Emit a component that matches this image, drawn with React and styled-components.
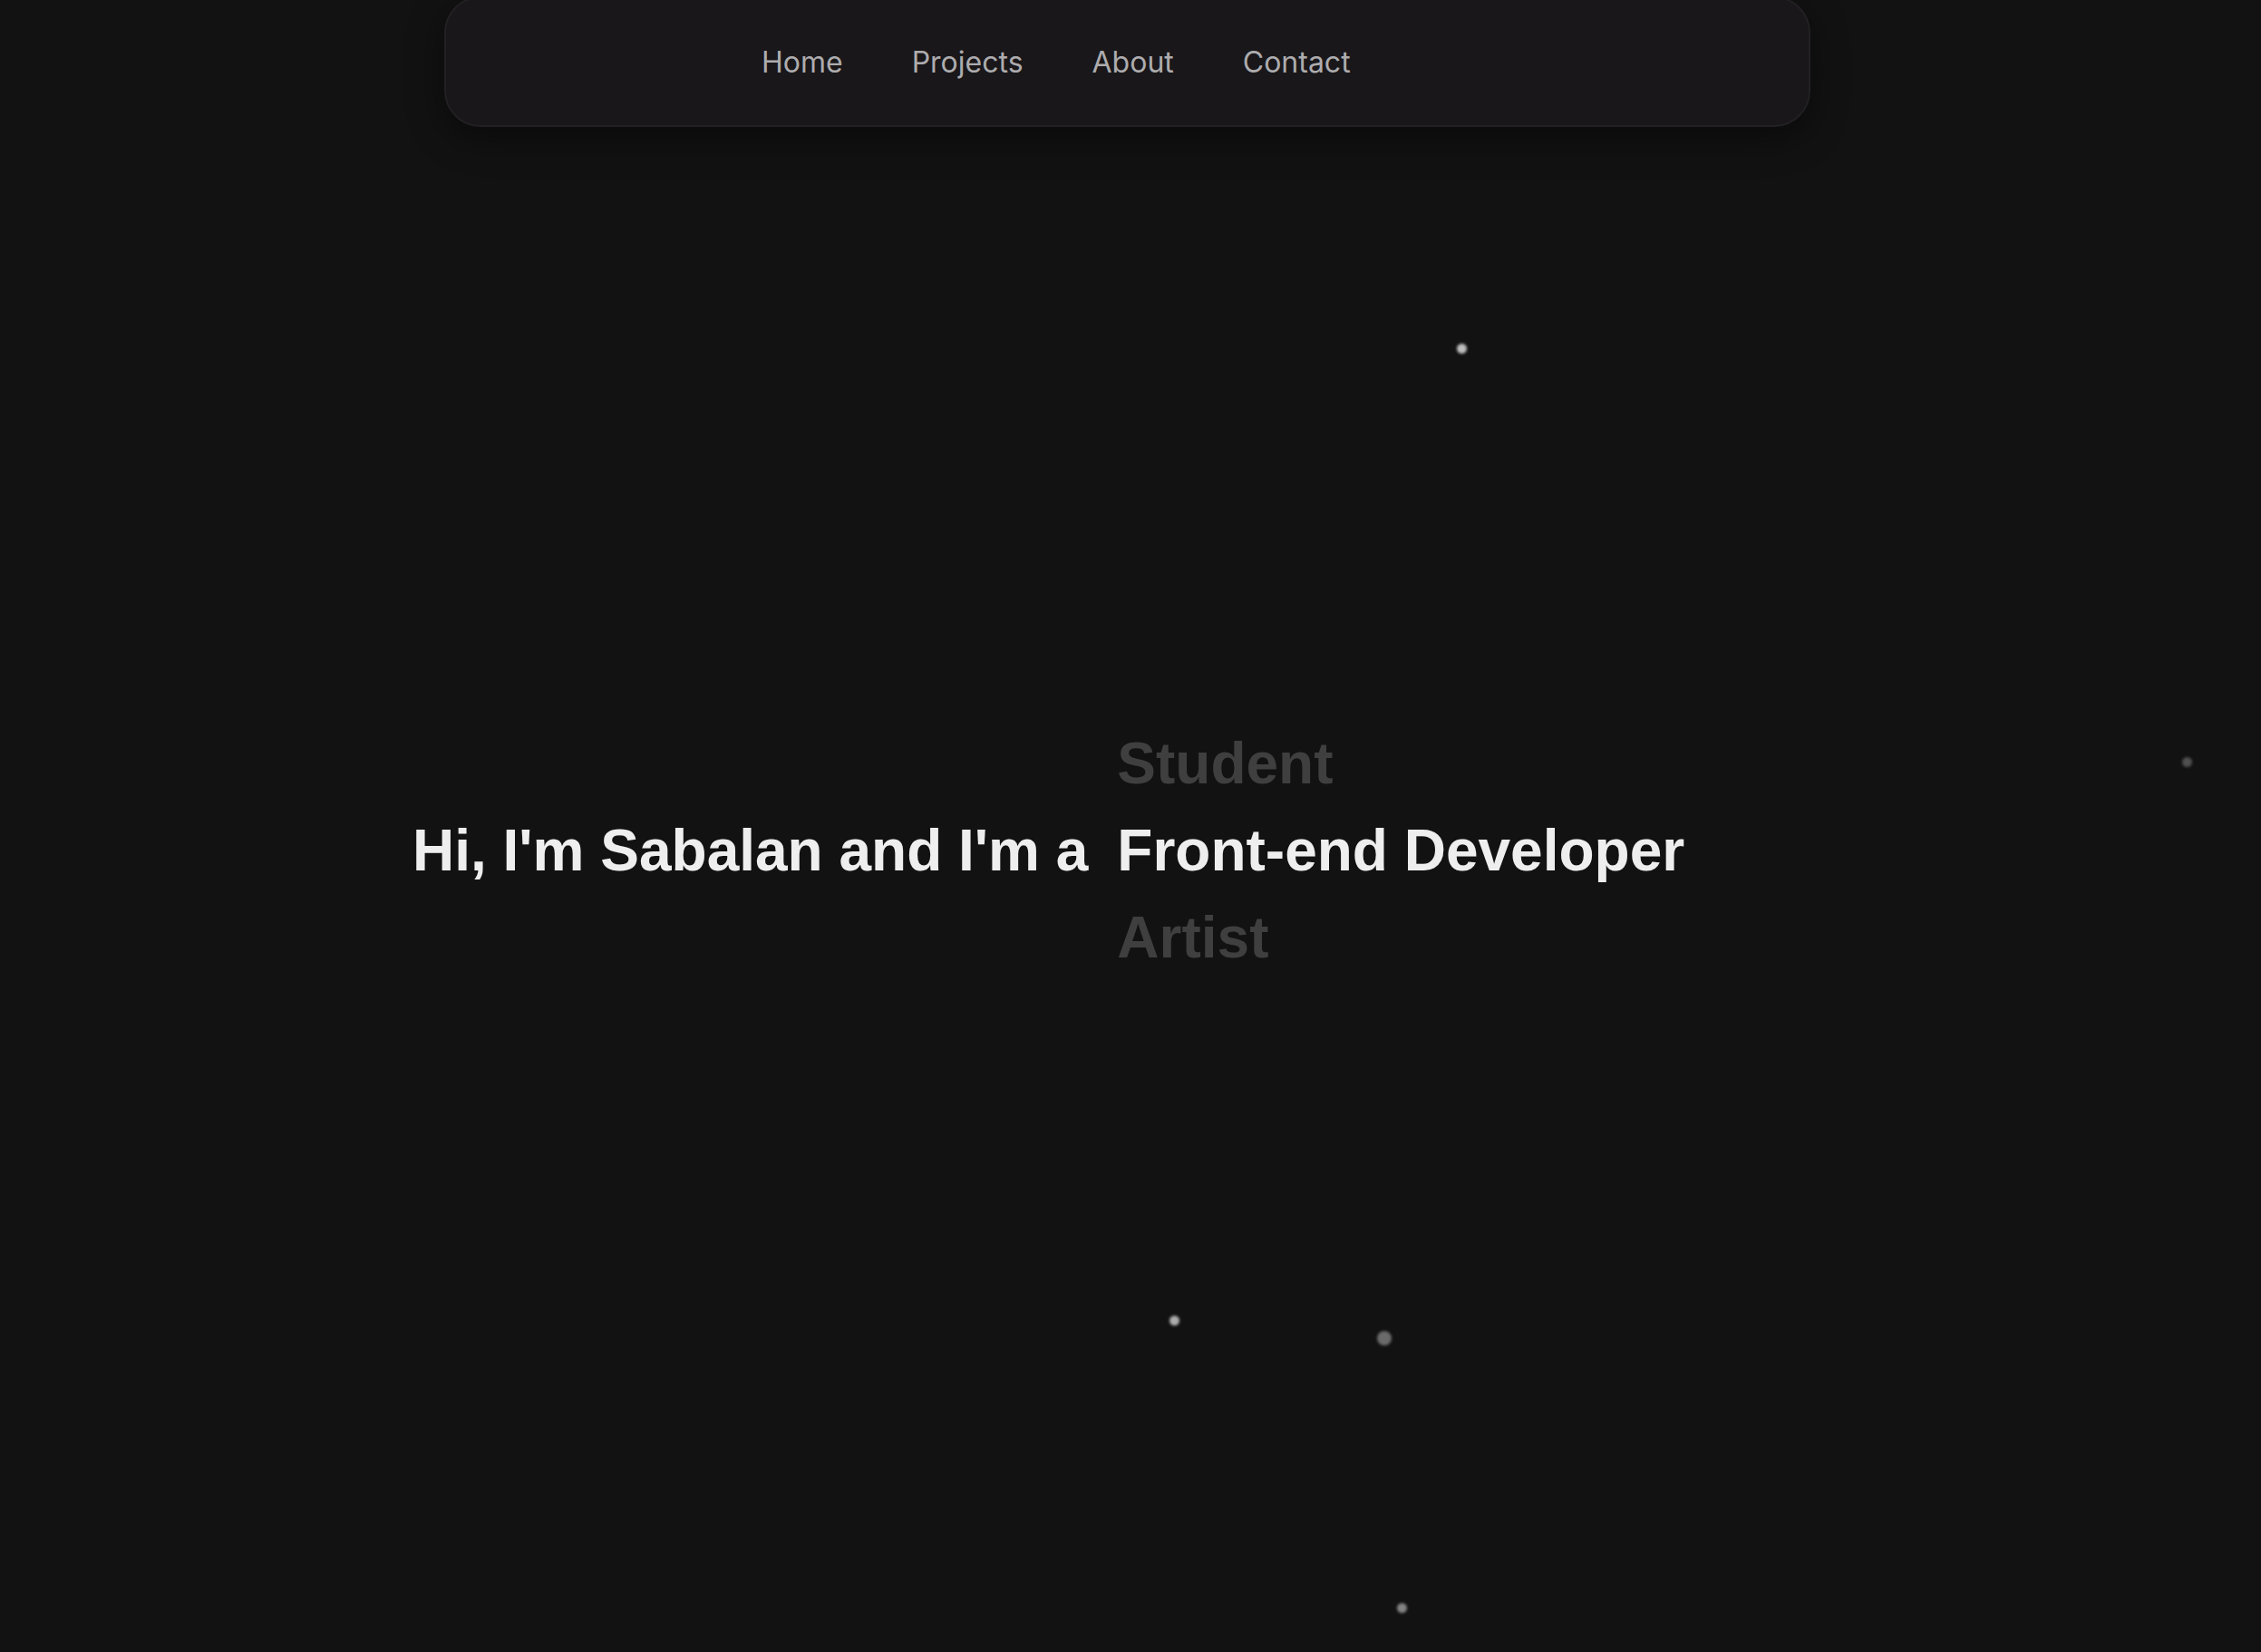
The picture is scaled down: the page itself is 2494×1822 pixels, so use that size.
import React from 'react'
import styled, { createGlobalStyle } from 'styled-components';

const GlobalStyle = createGlobalStyle`
  html, body {
    margin: 0;
    padding: 0;
    background: #121212;
    height: 100%;
    overflow: hidden;
  }
  #root {
    height: 100%;
  }
`

const Page = styled.div`
  position: relative;
  height: 100vh;
  display: flex;
  flex-direction: column;
  background: #121212;
  overflow: hidden;
`

const NavBar = styled.nav`
  box-sizing: border-box;
  width: 1507px;
  height: 144px;
  margin: -4px 0 0 calc(50% - 757px);
  padding-left: 348px;
  display: flex;
  align-items: center;
  gap: 76px;
  background: #19171a;
  border: 2px solid #222023;
  border-radius: 40px;
  box-shadow: 0 12px 40px rgba(0, 0, 0, 0.45);
  position: relative;
  z-index: 2;
`

const NavLink = styled.a`
  font-family: Inter, "Noto Sans", sans-serif;
  font-size: 32px;
  font-weight: 400;
  color: #adacae;
  text-decoration: none;
  cursor: pointer;
`

const Hero = styled.section`
  flex: 1;
  display: flex;
  align-items: center;
  gap: 32px;
  padding: 0 0 86px 455px;
  font-family: "Liberation Sans", Arial, sans-serif;
  font-weight: 700;
  font-size: 64px;
  line-height: 96px;
`

const Intro = styled.span`
  color: #eeeeee;
  white-space: nowrap;
`

const Words = styled.div`
  display: flex;
  flex-direction: column;
`

const Word = styled.span`
  color: ${({ active }) => (active ? '#eeeeee' : '#3f3f3f')};
  white-space: nowrap;
`

const Dot = styled.span`
  position: absolute;
  border-radius: 50%;
  background: ${({ shade }) => shade};
  filter: blur(1.6px);
  pointer-events: none;
`

const dots = [
  { x: 1612, y: 384, size: 11, shade: '#bdbdbd' },
  { x: 2412, y: 840, size: 11, shade: '#505050' },
  { x: 1295, y: 1456, size: 11, shade: '#adadad' },
  { x: 1527, y: 1476, size: 16, shade: '#6a6a6a' },
  { x: 1546, y: 1773, size: 11, shade: '#838383' },
]

const roles = ['Student', 'Front-end Developer', 'Artist']

const App = () => {
  return (
    <Page>
      <GlobalStyle />
      <NavBar>
        <NavLink>Home</NavLink>
        <NavLink>Projects</NavLink>
        <NavLink>About</NavLink>
        <NavLink>Contact</NavLink>
      </NavBar>
      <Hero>
        <Intro>Hi, I'm Sabalan and I'm a</Intro>
        <Words>
          {roles.map((role, i) => (
            <Word key={role} active={i === 1}>{role}</Word>
          ))}
        </Words>
      </Hero>
      {dots.map((d, i) => (
        <Dot
          key={i}
          shade={d.shade}
          style={{ left: d.x - d.size / 2, top: d.y - d.size / 2, width: d.size, height: d.size }}
        />
      ))}
    </Page>
  )
}

export default App;
